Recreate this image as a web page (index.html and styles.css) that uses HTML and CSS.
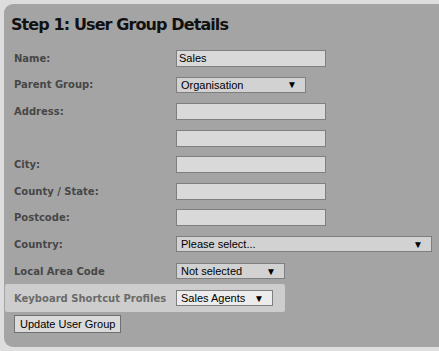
FILE: index.html
```html
<!DOCTYPE html>
<html lang="en">
<head>
    <meta charset="UTF-8">
    <title>User Group Details</title>
    <link rel="stylesheet" href="styles.css">
</head>
<body>
    <div class="panel">
        <h1>Step 1: User Group Details</h1>
        <form class="form">
            <div class="row">
                <label>Name:</label>
                <div class="field">Sales</div>
            </div>
            <div class="row">
                <label>Parent Group:</label>
                <div class="select sel-parent"><span>Organisation</span><span class="arrow">&#9660;</span></div>
            </div>
            <div class="row">
                <label>Address:</label>
                <div class="field"></div>
            </div>
            <div class="row">
                <label></label>
                <div class="field"></div>
            </div>
            <div class="row">
                <label>City:</label>
                <div class="field"></div>
            </div>
            <div class="row">
                <label>County / State:</label>
                <div class="field"></div>
            </div>
            <div class="row">
                <label>Postcode:</label>
                <div class="field"></div>
            </div>
            <div class="row">
                <label>Country:</label>
                <div class="select sel-country"><span>Please select...</span><span class="arrow">&#9660;</span></div>
            </div>
            <div class="row">
                <label>Local Area Code</label>
                <div class="select sel-local"><span>Not selected</span><span class="arrow">&#9660;</span></div>
            </div>
            <div class="row highlight">
                <label>Keyboard Shortcut Profiles</label>
                <div class="select sel-keys"><span>Sales Agents</span><span class="arrow">&#9660;</span></div>
            </div>
            <div class="actions">
                <button type="button">Update User Group</button>
            </div>
        </form>
    </div>
</body>
</html>
```

FILE: styles.css
```css
body {
    margin: 0;
    background-color: #dddddd;
    font-family: 'Liberation Sans', Arial, sans-serif;
    height: 351px;
    overflow: hidden;
}
.panel {
    margin: 4px 0 0 4px;
    height: 343px;
    background-color: #a4a4a4;
    border-radius: 9px 0 0 9px;
    box-sizing: border-box;
    padding: 11px 0 0 0;
}
h1 {
    margin: 0 0 0 7px;
    font-family: 'DejaVu Sans', Verdana, sans-serif;
    font-size: 16px;
    letter-spacing: -0.9px;
    line-height: 20px;
    color: #111111;
}
.form {
    margin-top: 10px;
}
.row {
    display: flex;
    align-items: center;
    height: 26.6px;
    padding-left: 10px;
}
.row label {
    width: 162px;
    flex: none;
    font-family: 'DejaVu Sans', Verdana, sans-serif;
    font-weight: bold;
    font-size: 10px;
    color: #474747;
}
.field {
    width: 150px;
    height: 17px;
    box-sizing: border-box;
    border: 1px solid #7f7f7f;
    background-color: #d9d9d9;
    font-size: 11px;
    line-height: 15px;
    padding-left: 2px;
    color: #000;
}
.select {
    display: flex;
    justify-content: space-between;
    align-items: center;
    height: 16px;
    box-sizing: border-box;
    border: 1px solid #7f7f7f;
    background-color: #d2d2d2;
    font-size: 11px;
    padding: 0 8px 0 4px;
    color: #000;
}
.arrow {
    font-size: 10px;
}
.sel-parent { width: 130px; }
.sel-country { width: 256px; }
.sel-local { width: 109px; }
.sel-keys {
    width: 97px;
    background-color: #ececec;
}
.highlight {
    background-color: #cdcdcd;
    width: 271px;
    height: 28px;
    margin: 0 0 0 1px;
    padding-left: 9px;
    border-radius: 2px;
}
.highlight label {
    color: #6a6a6a;
}
.actions {
    padding: 2px 0 0 10px;
}
button {
    font-family: 'Liberation Sans', Arial, sans-serif;
    font-size: 11px;
    background-color: #dadada;
    border: 1px solid #707070;
    padding: 0 5px;
    height: 18px;
    white-space: nowrap;
    color: #000;
}
```
